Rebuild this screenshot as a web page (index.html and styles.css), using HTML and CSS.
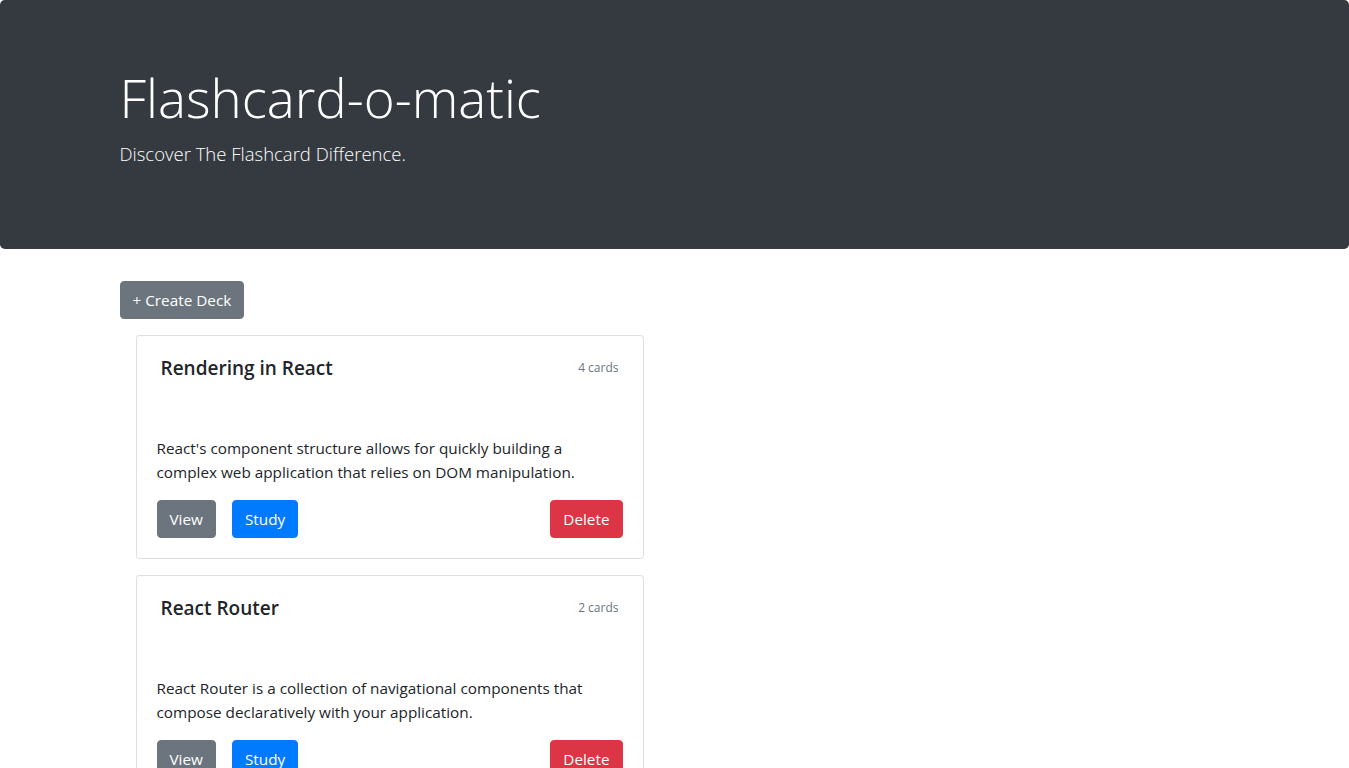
FILE: index.html
```html
<!DOCTYPE html>
<html lang="en">
<head>
<meta charset="utf-8">
<title>Flashcard-o-matic</title>
<link rel="stylesheet" href="styles.css">
</head>
<body>
<header class="jumbotron">
  <div class="container">
    <h1 class="display">Flashcard-o-matic</h1>
    <p class="lead">Discover The Flashcard Difference.</p>
  </div>
</header>
<main class="container">
  <button class="btn btn-secondary">+ Create Deck</button>
  <div class="deck-list">
    <div class="card">
      <div class="card-body">
        <div class="card-head">
          <h5 class="card-title">Rendering in React</h5>
          <small class="count">4 cards</small>
        </div>
        <p class="card-text">React's component structure allows for quickly building a complex web application that relies on DOM manipulation.</p>
        <div class="actions">
          <button class="btn btn-secondary">View</button>
          <button class="btn btn-primary">Study</button>
          <button class="btn btn-danger push">Delete</button>
        </div>
      </div>
    </div>
    <div class="card">
      <div class="card-body">
        <div class="card-head">
          <h5 class="card-title">React Router</h5>
          <small class="count">2 cards</small>
        </div>
        <p class="card-text">React Router is a collection of navigational components that compose declaratively with your application.</p>
        <div class="actions">
          <button class="btn btn-secondary">View</button>
          <button class="btn btn-primary">Study</button>
          <button class="btn btn-danger push">Delete</button>
        </div>
      </div>
    </div>
  </div>
</main>
</body>
</html>
```
FILE: styles.css
```css
* { box-sizing: border-box; }
html, body { margin: 0; padding: 0; }
body {
  font-family: "Open Sans", "Noto Sans", "Liberation Sans", sans-serif;
  font-size: 15.3px;
  line-height: 24px;
  color: #212529;
  background: #fff;
}
.container {
  width: 1140px;
  margin: 0 auto;
  padding: 0 15px;
}
.jumbotron {
  background: #343a40;
  color: #fff;
  padding: 64px 0;
  margin-bottom: 32px;
  border-radius: 4.8px;
}
.display {
  font-size: 52.8px;
  font-weight: 300;
  line-height: 67.2px;
  margin: 0 0 8px;
}
.lead {
  font-size: 18.5px;
  font-weight: 300;
  line-height: 30px;
  margin: 0 0 16px;
}
.btn {
  display: inline-block;
  font-family: inherit;
  font-size: 15.3px;
  line-height: 24px;
  padding: 6px 12px;
  border: 1px solid transparent;
  border-radius: 4px;
  color: #fff;
  cursor: pointer;
  vertical-align: middle;
}
.btn-secondary { background: #6c757d; border-color: #6c757d; }
.btn-primary { background: #007bff; border-color: #007bff; }
.btn-danger { background: #dc3545; border-color: #dc3545; }
.deck-list {
  width: 540px;
  padding-top: 0.02px;
}
.card {
  margin: 16px;
  border: 1px solid rgba(0,0,0,.125);
  border-radius: 4px;
  background: #fff;
}
.card-body { padding: 20px; }
.card-head {
  display: flex;
  justify-content: space-between;
  align-items: center;
  padding: 0 4px;
  margin-bottom: 56px;
}
.card-title {
  font-size: 19px;
  font-weight: 600;
  line-height: 24px;
  margin: 0;
}
.count {
  font-size: 12px;
  color: #6c757d;
}
.card-text { margin: 0 0 16px; }
.actions {
  display: flex;
  gap: 16px;
}
.push { margin-left: auto; }
```
